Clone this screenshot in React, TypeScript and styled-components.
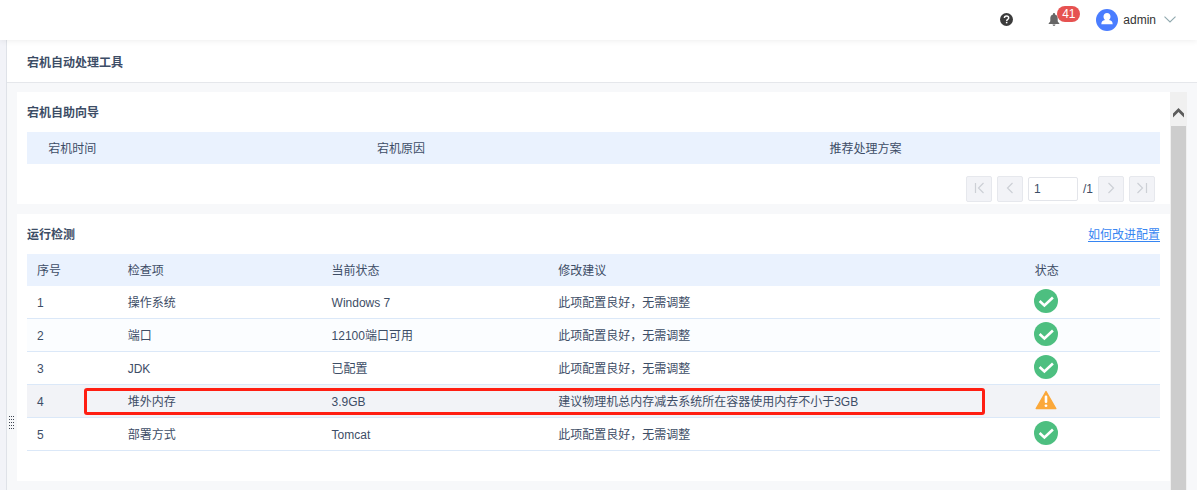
import React from "react";
import styled, { createGlobalStyle } from "styled-components";

const GlobalStyle = createGlobalStyle`
  *, *::before, *::after { box-sizing: border-box; }
  body {
    margin: 0;
    font-family: "Liberation Sans", "Noto Sans CJK SC", sans-serif;
    font-size: 12px;
    line-height: 16px;
    color: #3d4d66;
    background: #f7f8fa;
  }
  button, input { font: inherit; color: inherit; margin: 0; }
`;

const Page = styled.div`
  display: flex;
  flex-direction: column;
  height: 100vh;
  overflow: hidden;
`;

const TopBar = styled.header`
  display: flex;
  flex: none;
  align-items: center;
  justify-content: flex-end;
  height: 40px;
  padding: 0 21px;
  background: #fff;
  box-shadow: 0 1px 6px rgba(0, 0, 0, 0.07);
  z-index: 1;
`;

const IconButton = styled.button`
  position: relative;
  display: flex;
  padding: 0;
  border: 0;
  background: none;
`;

const HelpButton = styled(IconButton)`
  margin: 0 35px 2px 0;
`;

const BellButton = styled(IconButton)`
  margin: 0 36px 2px 0;
`;

const Badge = styled.span`
  position: absolute;
  left: 9px;
  top: -7px;
  width: 23px;
  height: 16px;
  border-radius: 8px;
  background: #e65251;
  color: #fff;
  text-align: center;
`;

const UserButton = styled(IconButton)`
  align-items: center;
  color: #333;
  gap: 5px;
`;

const UserName = styled.span`
  margin-right: 3px;
`;

const Body = styled.div`
  display: flex;
  flex: 1;
  min-height: 0;
`;

const SideStrip = styled.aside`
  flex: none;
  width: 7px;
  background: #f2f3f8;
  border-right: 1px solid #dfe2e8;
`;

const Main = styled.main`
  display: flex;
  flex: 1;
  flex-direction: column;
  min-width: 0;
`;

const PageTitle = styled.h1`
  flex: none;
  margin: 0;
  padding: 15px 20px 11px;
  border-bottom: 1px solid #e5e7eb;
  background: #fff;
  font-size: 12px;
  font-weight: bold;
  line-height: 16px;
`;

const Workspace = styled.div`
  display: flex;
  flex: 1;
  min-height: 0;
  padding: 9px 10px 0 0;
`;

const Gutter = styled.div`
  display: flex;
  flex: none;
  justify-content: center;
  width: 10px;
  padding-top: 324px;
`;

const Scroller = styled.div`
  display: flex;
  flex: 1;
  flex-direction: column;
  gap: 10px;
  min-width: 0;
  overflow: hidden;
`;

const ScrollTrack = styled.div`
  display: flex;
  flex: none;
  flex-direction: column;
  width: 17px;
  padding: 0 1px;
  background: #f0f0f0;
`;

const ScrollUp = styled.button`
  display: flex;
  align-items: center;
  justify-content: center;
  height: 34px;
  padding: 8px 0 0;
  border: 0;
  background: none;
`;

const ScrollThumb = styled.div`
  flex: 1;
  background: #cdcdcd;
`;

const Card = styled.section<{ $bottom: number }>`
  flex: none;
  padding: 10px 10px ${(p) => p.$bottom}px;
  background: #fff;
`;

const CardHead = styled.div`
  display: flex;
  align-items: center;
  justify-content: space-between;
  height: 20px;
  margin-bottom: 10px;
  padding-top: 2px;
`;

const CardTitle = styled.h2`
  margin: 0;
  font-size: 12px;
  font-weight: bold;
  line-height: 16px;
`;

const HelpLink = styled.a`
  color: #3685f2;
  text-decoration: underline;
  text-underline-offset: 2px;
`;

const Table = styled.table`
  width: 100%;
  table-layout: fixed;
  border-collapse: separate;
  border-spacing: 0;
`;

const Th = styled.th<{ $width: string; $center?: boolean }>`
  width: ${(p) => p.$width};
  height: 32px;
  padding: 2px 10px 0;
  background: #eaf2fe;
  font-weight: normal;
  text-align: ${(p) => (p.$center ? "center" : "left")};
`;

const Row = styled.tr<{ $tone: string }>`
  position: relative;
  background: ${(p) => p.$tone};
`;

const Td = styled.td<{ $icon?: boolean }>`
  height: 33px;
  padding: ${(p) => (p.$icon ? "0 12px 2px 10px" : "2px 10px 0")};
  border-bottom: 1px solid #dbe8f8;
  white-space: nowrap;

  > svg { display: block; margin: 0 auto; }
`;

const Marker = styled.span`
  position: absolute;
  left: 5%;
  right: 175px;
  top: 3px;
  bottom: 3px;
  border: 3px solid #ff1e12;
  border-radius: 3px;
`;

const Pager = styled.nav`
  display: flex;
  align-items: center;
  justify-content: flex-end;
  gap: 5px;
  padding: 12px 5px 0 0;
`;

const PagerButton = styled.button`
  display: flex;
  align-items: center;
  justify-content: center;
  width: 26px;
  height: 26px;
  padding: 0 0 2px;
  border: 1px solid #e6e8ed;
  border-radius: 2px;
  background: #f2f3f7;
`;

const PagerInput = styled.input`
  width: 50px;
  height: 24px;
  padding: 0 5px;
  border: 1px solid #e3e5ea;
  border-radius: 2px;
  background: #fff;
`;

const Grip = () => (
  <svg width="6" height="13" viewBox="0 0 6 13" fill="#3f4552" shapeRendering="crispEdges">
    {[0, 3, 6, 9, 12].map((y) =>
      [0, 2, 4].map((x) => <rect key={`${x}-${y}`} x={x} y={y} width="1" height="1" />)
    )}
  </svg>
);

const HelpIcon = () => (
  <svg width="13" height="13" viewBox="0 0 13 13">
    <circle cx="6.5" cy="6.5" r="6.5" fill="#3b3b3b" />
    <path
      d="M4.4 5.1c0-1.3.9-2.1 2.2-2.1s2.1.8 2.1 1.9c0 1.5-2 1.5-2 3"
      fill="none"
      stroke="#fff"
      strokeWidth="1.4"
    />
    <rect x="5.9" y="8.8" width="1.5" height="1.5" fill="#fff" />
  </svg>
);

const BellIcon = () => (
  <svg width="12" height="13" viewBox="0 0 12 13" fill="#666">
    <path d="M6 0c.6 0 1 .4 1 1v.4c1.700.5 2.700 1.900 2.700 3.700v2.700c0 .9.500 1.500 1.600 2.400v.9H.7v-.9c1.100-.9 1.600-1.500 1.600-2.400V5.100C2.300 3.300 3.300 1.900 5 1.400V1c0-.6.4-1 1-1z" />
    <path d="M4.500 11.500h3c-.1.900-.7 1.400-1.500 1.400s-1.400-.5-1.500-1.400z" />
  </svg>
);

const AvatarIcon = () => (
  <svg width="22" height="22" viewBox="0 0 22 22">
    <circle cx="11" cy="11" r="11" fill="#4a7dff" />
    <path
      d="M11 4c2.200 0 3.500 1.600 3.500 3.600 0 1.400-.6 2.600-1.500 3.300 2.500.5 3.600 1.600 3.700 4.300H5.300c.1-2.700 1.200-3.800 3.700-4.300-.9-.7-1.500-1.900-1.500-3.300C7.500 5.600 8.800 4 11 4z"
      fill="#fff"
    />
  </svg>
);

const ChevronDown = () => (
  <svg width="12" height="8" viewBox="0 0 12 8" fill="none" stroke="#8fa8ae" strokeWidth="1.1">
    <path d="M.5.700 6 6l5.500-5.300" />
  </svg>
);

const ScrollArrow = () => (
  <svg width="11" height="10" viewBox="0 0 11 10">
    <path d="M5.500 0 11 5.500V9.500L5.500 4 0 9.500V5.500z" fill="#5c5c5c" />
  </svg>
);

const pagerPaths = {
  first: "M2.500 1v10M10.500 1l-5 5 5 5",
  prev: "M8.500 1l-5 5 5 5",
  next: "M3.500 1l5 5-5 5",
  last: "M1.500 1l5 5-5 5M10.500 1v10",
};

const PagerIcon = ({ kind }: { kind: keyof typeof pagerPaths }) => (
  <svg width="12" height="12" viewBox="0 0 12 12" fill="none" stroke="#cdd0d6" strokeWidth="1.2">
    <path d={pagerPaths[kind]} />
  </svg>
);

const OkIcon = () => (
  <svg width="24" height="24" viewBox="0 0 24 24" role="img" aria-label="正常">
    <circle cx="12" cy="12" r="12" fill="#4dbf80" />
    <path d="M5.600 12 10.400 16.500 18.900 8.500" fill="none" stroke="#fff" strokeWidth="2.6" />
  </svg>
);

const WarnIcon = () => (
  <svg width="22" height="20" viewBox="0 0 22 20" role="img" aria-label="警告">
    <path
      d="M11 1.500 20.800 18.600H1.200z"
      fill="#fba83a"
      stroke="#fba83a"
      strokeWidth="1.4"
      strokeLinejoin="round"
    />
    <rect x="9.7" y="5.5" width="2.6" height="7.5" rx="1.2" fill="#fff" />
    <rect x="9.6" y="14.5" width="2.8" height="2.4" rx="1.1" fill="#fff" />
  </svg>
);

interface Check {
  item: string;
  state: string;
  advice: string;
  warn?: boolean;
}

const GOOD = "此项配置良好，无需调整";

const checks: Check[] = [
  { item: "操作系统", state: "Windows 7", advice: GOOD },
  { item: "端口", state: "12100端口可用", advice: GOOD },
  { item: "JDK", state: "已配置", advice: GOOD },
  {
    item: "堆外内存",
    state: "3.9GB",
    advice: "建议物理机总内存减去系统所在容器使用内存不小于3GB",
    warn: true,
  },
  { item: "部署方式", state: "Tomcat", advice: GOOD },
];

const rowTone = (check: Check, index: number) =>
  check.warn ? "#f2f3f7" : index % 2 ? "#fbfdff" : "#fff";

export default function App() {
  return (
    <>
      <GlobalStyle />
      <Page>
        <TopBar>
          <HelpButton type="button" aria-label="帮助">
            <HelpIcon />
          </HelpButton>
          <BellButton type="button" aria-label="消息">
            <BellIcon />
            <Badge>41</Badge>
          </BellButton>
          <UserButton type="button">
            <AvatarIcon />
            <UserName>admin</UserName>
            <ChevronDown />
          </UserButton>
        </TopBar>
        <Body>
          <SideStrip />
          <Main>
            <PageTitle>宕机自动处理工具</PageTitle>
            <Workspace>
              <Gutter>
                <Grip />
              </Gutter>
              <Scroller>
                <Card $bottom={2}>
                  <CardHead>
                    <CardTitle>宕机自助向导</CardTitle>
                  </CardHead>
                  <Table>
                    <thead>
                      <tr>
                        <Th $width="8%" $center>宕机时间</Th>
                        <Th $width="50%" $center>宕机原因</Th>
                        <Th $width="32%" $center>推荐处理方案</Th>
                        <Th $width="10%" />
                      </tr>
                    </thead>
                  </Table>
                  <Pager aria-label="分页">
                    <PagerButton type="button" aria-label="首页">
                      <PagerIcon kind="first" />
                    </PagerButton>
                    <PagerButton type="button" aria-label="上一页">
                      <PagerIcon kind="prev" />
                    </PagerButton>
                    <PagerInput type="text" defaultValue="1" aria-label="页码" />
                    <span>/1</span>
                    <PagerButton type="button" aria-label="下一页">
                      <PagerIcon kind="next" />
                    </PagerButton>
                    <PagerButton type="button" aria-label="末页">
                      <PagerIcon kind="last" />
                    </PagerButton>
                  </Pager>
                </Card>
                <Card $bottom={30}>
                  <CardHead>
                    <CardTitle>运行检测</CardTitle>
                    <HelpLink href="#improve">如何改进配置</HelpLink>
                  </CardHead>
                  <Table>
                    <thead>
                      <tr>
                        <Th $width="8%">序号</Th>
                        <Th $width="18%">检查项</Th>
                        <Th $width="20%">当前状态</Th>
                        <Th $width="34%">修改建议</Th>
                        <Th $width="20%" $center>状态</Th>
                      </tr>
                    </thead>
                    <tbody>
                      {checks.map((check, index) => (
                        <Row key={check.item} $tone={rowTone(check, index)}>
                          <Td>{index + 1}</Td>
                          <Td>{check.item}</Td>
                          <Td>{check.state}</Td>
                          <Td>{check.advice}</Td>
                          <Td $icon>
                            {check.warn ? <WarnIcon /> : <OkIcon />}
                            {check.warn && <Marker />}
                          </Td>
                        </Row>
                      ))}
                    </tbody>
                  </Table>
                </Card>
              </Scroller>
              <ScrollTrack>
                <ScrollUp type="button" aria-label="向上滚动">
                  <ScrollArrow />
                </ScrollUp>
                <ScrollThumb />
              </ScrollTrack>
            </Workspace>
          </Main>
        </Body>
      </Page>
    </>
  );
}
